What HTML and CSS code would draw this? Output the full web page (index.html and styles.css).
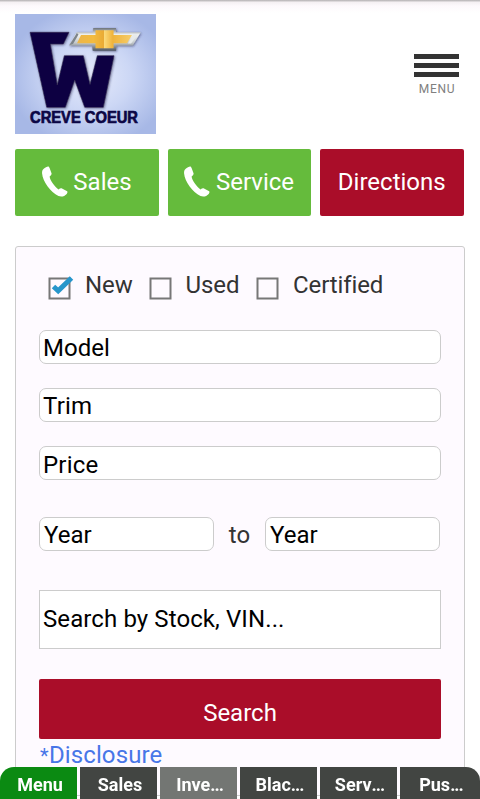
FILE: index.html
```
<!DOCTYPE html>
<html lang="en">
<head>
  <meta charset="UTF-8" />
  <meta name="viewport" content="width=device-width, initial-scale=1.0"/>
  <title>Creve Coeur</title>
  <link rel="stylesheet" href="styles.css">
</head>
<body>
  <header class="header">
    <svg class="logo" viewBox="0 0 141 120" role="img" aria-label="Creve Coeur">
      <defs>
        <radialGradient id="sky" cx="0.53" cy="0.52" r="0.58">
          <stop offset="0" stop-color="#e6ebfb"/>
          <stop offset="0.5" stop-color="#ccd7f5"/>
          <stop offset="1" stop-color="#a7b8e6"/>
        </radialGradient>
        <linearGradient id="gold" x1="0" y1="0" x2="1" y2="0">
          <stop offset="0" stop-color="#ecb54a"/>
          <stop offset="0.3" stop-color="#f3bb3f"/>
          <stop offset="0.49" stop-color="#e9aa34"/>
          <stop offset="0.5" stop-color="#fbd978"/>
          <stop offset="0.65" stop-color="#efb33c"/>
          <stop offset="1" stop-color="#f6cd6a"/>
        </linearGradient>
        <linearGradient id="chrome" x1="0" y1="0" x2="0" y2="1">
          <stop offset="0" stop-color="#6c7278"/>
          <stop offset="0.3" stop-color="#f2f4f4"/>
          <stop offset="0.65" stop-color="#c4c9cc"/>
          <stop offset="1" stop-color="#4d5560"/>
        </linearGradient>
        <filter id="shade" x="-20%" y="-20%" width="140%" height="140%">
          <feDropShadow dx="0.8" dy="0.8" stdDeviation="1" flood-color="#27264f" flood-opacity="0.6"/>
        </filter>
      </defs>
      <rect width="141" height="120" fill="url(#sky)"/>
      <path filter="url(#shade)" fill="#080042" stroke="#392d50" stroke-width="0.6" d="M15 18.3H54L48.3 30H35.3L42.3 71L49.3 41.7H68.3L75 70.5L82.3 41.7H99L88.3 93.3H69.7L59.7 66L50.3 93.3H31.7Z"/>
      <g filter="url(#shade)">
        <path fill="url(#chrome)" d="M61.7 18.3H77.7L78.3 14H101V18.3H125.7L117.7 31.5H101.3L101 36.7H77.7L77 31.5H54Z"/>
        <path fill="url(#gold)" d="M66 21H80.5V16.3H98.6V21H117L112 29.3H98.6V34.2H80.5V29.3H62Z"/>
        <path fill="#e6eaeb" d="M118 20.5H123L116 29.5H113Z"/>
        <path fill="#7d848b" d="M63.5 20.5L58 30L54.5 31L61.8 19Z"/>
      </g>
      <text class="logo-text" x="15" y="108.6" textLength="108" lengthAdjust="spacingAndGlyphs">CREVE COEUR</text>
    </svg>
    <a class="menu-link">
      <span class="bar"></span>
      <span class="bar"></span>
      <span class="bar"></span>
      <span class="menu-label">MENU</span>
    </a>
  </header>

  <nav class="actions">
    <a class="btn green">
      <svg class="phone" viewBox="0 0 26 31"><path d="M.6 4C2 2.2 4 1 6 .4C6.8.3 7.2 1 7.5 1.8L9.6 7.4C9.6 8.6 9 9.4 7.6 10.4C8 14 12.5 20.5 16.6 23.4C17.6 22.4 19 22 20 22.4L25.2 25.2C25.8 26 25.3 27 24.7 27.9C22.6 30.3 19.5 31.1 16.5 30C8.5 26 .6 15.5 .1 7.5C0 6 .1 4.9.6 4Z"/></svg>
      <span>Sales</span>
    </a>
    <a class="btn green">
      <svg class="phone" viewBox="0 0 26 31"><path d="M.6 4C2 2.2 4 1 6 .4C6.8.3 7.2 1 7.5 1.8L9.6 7.4C9.6 8.6 9 9.4 7.6 10.4C8 14 12.5 20.5 16.6 23.4C17.6 22.4 19 22 20 22.4L25.2 25.2C25.8 26 25.3 27 24.7 27.9C22.6 30.3 19.5 31.1 16.5 30C8.5 26 .6 15.5 .1 7.5C0 6 .1 4.9.6 4Z"/></svg>
      <span>Service</span>
    </a>
    <a class="btn red"><span>Directions</span></a>
  </nav>

  <form class="panel">
    <div class="checks">
      <label class="check new">
        <svg class="box" viewBox="0 0 26 24"><rect x="1.5" y="2.5" width="20" height="20"/><path d="M5.5 10.5L10.2 14.8L23.5 2"/></svg>
        <span>New</span>
      </label>
      <label class="check used">
        <svg class="box" viewBox="0 0 26 24"><rect x="1.5" y="2.5" width="20" height="20"/></svg>
        <span>Used</span>
      </label>
      <label class="check">
        <svg class="box" viewBox="0 0 26 24"><rect x="1.5" y="2.5" width="20" height="20"/></svg>
        <span>Certified</span>
      </label>
    </div>
    <div class="select model">Model</div>
    <div class="select trim">Trim</div>
    <div class="select price">Price</div>
    <div class="years">
      <div class="select">Year</div>
      <span class="to">to</span>
      <div class="select">Year</div>
    </div>
    <div class="search-field">Search by Stock, VIN...</div>
    <div class="search-btn">Search</div>
    <a class="disclosure"><span class="star">*</span>Disclosure</a>
  </form>

  <nav class="tabs">
    <a class="tab active">Menu</a>
    <a class="tab">Sales</a>
    <a class="tab light">Inve<span class="dots">...</span></a>
    <a class="tab">Blac<span class="dots">...</span></a>
    <a class="tab">Serv<span class="dots">...</span></a>
    <a class="tab last">Pus<span class="dots">...</span></a>
  </nav>
</body>
</html>
```
FILE: styles.css
```
* {
  box-sizing: border-box;
}
body {
  margin: 0;
  height: 799px;
  overflow: hidden;
  background: linear-gradient(#b9b6b8 0, #c6c3c5 1px, #f4eff2 2px, #fdf9fc 6px, #fff 13px);
  font-family: Roboto, sans-serif;
  font-size: 24px;
  line-height: 28px;
  color: #333;
}
.header {
  display: flex;
  justify-content: space-between;
  height: 149px;
  padding: 14px 21px 0 15px;
}
.logo {
  width: 141px;
  height: 120px;
}
.logo-text {
  font-family: "Liberation Sans", sans-serif;
  font-size: 16px;
  font-weight: bold;
  fill: #0b0645;
  stroke: #0b0645;
  stroke-width: 0.7px;
}
.menu-link {
  display: flex;
  flex-direction: column;
  gap: 4px;
  width: 45px;
  padding-top: 40px;
}
.bar {
  height: 5px;
  background: #333;
}
.menu-label {
  padding: 1px 0 0 1px;
  font-size: 12px;
  line-height: 14px;
  letter-spacing: 0.7px;
  text-align: center;
  color: #808080;
}
.actions {
  display: flex;
  gap: 9px;
  padding: 0 16.5px 0 15px;
}
.btn {
  display: flex;
  flex: 1;
  align-items: center;
  justify-content: center;
  height: 66.5px;
  padding-bottom: 1.5px;
  border-radius: 2px;
  color: #fff;
}
.green {
  background: #65bb3c;
}
.red {
  background: #aa0d29;
}
.phone {
  width: 26px;
  height: 31px;
  margin-right: 5.5px;
  fill: #fff;
}
.panel {
  height: 550px;
  margin: 30.5px 15px 0;
  padding: 24px 23px 0;
  border: 1px solid #ccc;
  border-radius: 3px;
  background: #fefaff;
}
.checks {
  display: flex;
  height: 59px;
  padding-left: 9px;
}
.check {
  display: flex;
  letter-spacing: -0.1px;
}
.check.new {
  width: 100.5px;
}
.check.used {
  width: 107.5px;
}
.box {
  width: 26px;
  height: 24px;
  margin: 5px 11px 0 0;
  fill: none;
  stroke: #777;
  stroke-width: 2;
}
.box path {
  stroke: #2696cb;
  stroke-width: 5;
}
.select {
  height: 34px;
  padding: 3px;
  border: 1px solid #ccc;
  border-radius: 7px;
  background: #fff;
  color: #000;
}
.model,
.trim {
  margin-bottom: 24px;
}
.trim,
.price {
  letter-spacing: 0.2px;
}
.price {
  padding-top: 4px;
  margin-bottom: 37px;
}
.years {
  display: flex;
  align-items: center;
  width: 401px;
  margin-bottom: 39px;
}
.years .select {
  width: 175px;
  padding-left: 4px;
}
.to {
  flex: 1;
  padding-top: 1px;
  text-align: center;
}
.search-field {
  height: 59px;
  padding: 14px 3px;
  margin-bottom: 30px;
  border: 1px solid #ccc;
  background: #fff;
  color: #000;
  letter-spacing: 0.1px;
}
.search-btn {
  height: 60px;
  padding-top: 20px;
  border-radius: 2px;
  background: #aa0d29;
  text-align: center;
  color: #fff;
}
.disclosure {
  display: block;
  margin-top: 2px;
  color: #4876e8;
  letter-spacing: 0.1px;
}
.star {
  display: inline-block;
  width: 10px;
  font-size: 20px;
  line-height: 20px;
  padding-left: 1px;
}
.tabs {
  position: fixed;
  left: 0;
  right: 0;
  bottom: 0;
  display: grid;
  grid-template-columns: repeat(5, 77px) 80px;
  gap: 3px;
  height: 32px;
}
.tab {
  padding: 4px 0 0 3px;
  background: #424542;
  font-size: 18px;
  font-weight: bold;
  text-align: center;
  color: #fff;
}
.dots {
  margin-right: 1px;
  letter-spacing: -1px;
}
.active {
  border-top-left-radius: 14px;
  background: #0b8a12;
}
.light {
  background: #737673;
}
.last {
  border-top-right-radius: 14px;
}
```
